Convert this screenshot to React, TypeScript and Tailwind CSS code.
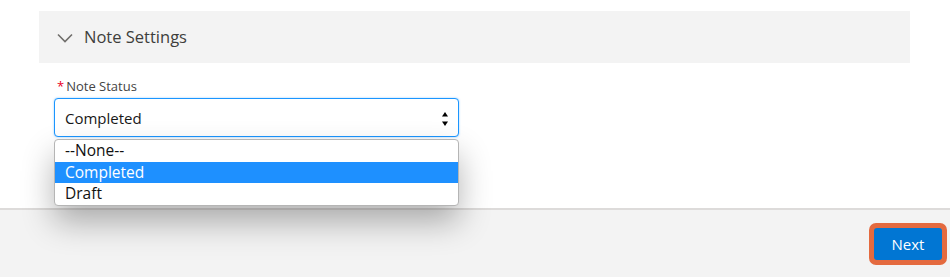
const OPTIONS = ['--None--', 'Completed', 'Draft']

export default function App() {
  const selected = 'Completed'

  return (
    <div className="flex h-[277px] w-[950px] flex-col overflow-hidden bg-white font-['Open_Sans',sans-serif] text-[#181818]">
      {/* Section body */}
      <div className="relative z-10 h-[208px] shrink-0 pt-[11px]">
        <div className="ml-[39px] flex h-[52px] w-[871px] items-center bg-[#f3f3f3] pl-[18px]">
          <svg width="16" height="10" viewBox="0 0 16 10" className="mt-[1px] text-[#706e6b]">
            <path d="M1 1.5 L8 8.5 L15 1.5" fill="none" stroke="currentColor" strokeWidth="1.6" />
          </svg>
          <span className="ml-[11px] text-[16.5px] text-[#3e3e3c]">Note Settings</span>
        </div>

        <div className="ml-[54px] mt-[15px] w-[405px]">
          <label className="flex h-[18px] items-center text-[13px] text-[#444444]">
            <span className="ml-[3px] mr-[2px] text-[#ea001e]">*</span>
            Note Status
          </label>
          <div className="relative mt-[2px]">
            <div className="flex h-[39px] items-center justify-between rounded-[4px] border border-[#1b96ff] bg-white pl-[10px] pr-[9px] pt-[2px] shadow-[0_0_2px_rgba(27,150,255,0.5)]">
              <span className="text-[15px] text-[#181818]">{selected}</span>
              <svg width="8" height="18" viewBox="0 0 8 18" className="text-black">
                <path d="M4 2 L7 6.5 H1 Z" fill="currentColor" />
                <path d="M4 16 L7 11.5 H1 Z" fill="currentColor" />
              </svg>
            </div>

            {/* Open native list */}
            <div className="absolute left-0 top-[41px] w-[405px] overflow-hidden rounded-[4px] border border-[#b5b5b5] bg-white shadow-[0_16px_32px_rgba(0,0,0,0.3)]">
              {OPTIONS.map((opt) => (
                <div
                  key={opt}
                  className={`flex h-[21.5px] items-center pl-[10px] text-[15.5px] ${
                    opt === selected ? 'bg-[#1e90ff] text-white' : 'text-[#111111]'
                  }`}
                >
                  {opt}
                </div>
              ))}
            </div>
          </div>
        </div>
      </div>

      {/* Footer */}
      <div className="flex flex-1 items-center justify-end border-t-2 border-[#dddbda] bg-[#f3f3f3] pr-[3px]">
        <div className="mt-[1px] rounded-[7px] bg-[#e46a3f] p-[5px]">
          <button className="h-[32px] w-[68px] rounded-[3px] bg-[#0176d3] text-[15px] text-white">Next</button>
        </div>
      </div>
    </div>
  )
}
